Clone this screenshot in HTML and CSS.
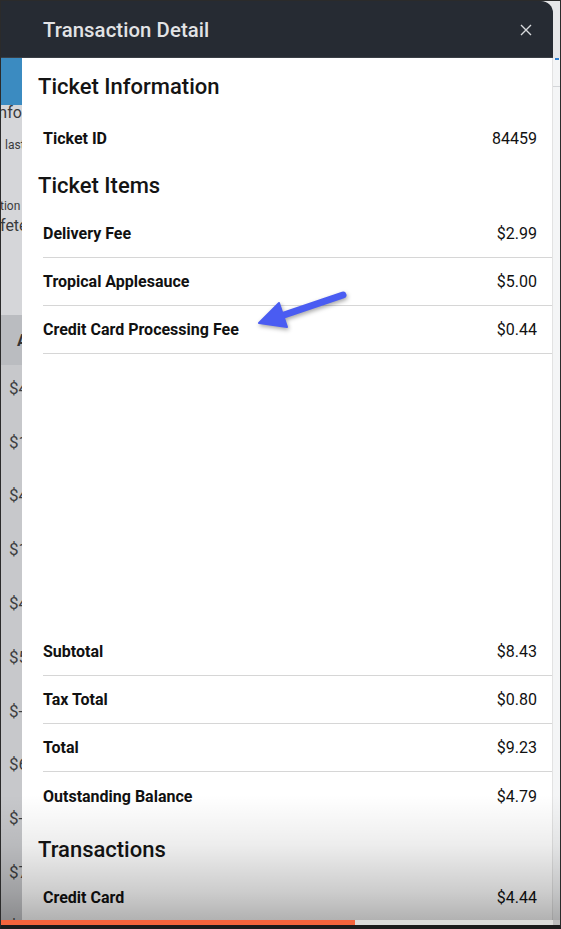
FILE: index.html
```html
<!DOCTYPE html>
<html>
<head>
<meta charset="utf-8">
<link rel="stylesheet" href="styles.css">
</head>
<body>
<div class="screen">
  <div class="topbar">
    <div class="header">
      <span class="title">Transaction Detail</span>
      <svg class="close" width="12" height="12" viewBox="0 0 12 12"><path d="M1 1L11 11M11 1L1 11" stroke="#d8dadd" stroke-width="1.4" fill="none"/></svg>
    </div>
    <div class="topgap"></div>
  </div>
  <div class="main">
    <div class="leftstrip">
      <div class="bluebox"></div>
      <div class="infoarea">
        <div class="t16 neg7">Information</div>
        <div class="t12 last">last</div>
        <div class="t12 neg1 tion">tion</div>
        <div class="t16 neg1 fete">fete</div>
      </div>
      <div class="band"><span>A</span></div>
      <div class="amounts">
        <div class="amt">$4.00</div>
        <div class="amt">$1.00</div>
        <div class="amt">$4.00</div>
        <div class="amt">$1.00</div>
        <div class="amt">$4.00</div>
        <div class="amt">$5.00</div>
        <div class="amt">$-1.00</div>
        <div class="amt">$6.00</div>
        <div class="amt">$-1.00</div>
        <div class="amt">$7.00</div>
        <div class="amt">$-1.00</div>
      </div>
    </div>
    <div class="modal">
      <h2 class="h-first">Ticket Information</h2>
      <div class="row plain r-id"><span class="lbl">Ticket ID</span><span class="val">84459</span></div>
      <h2 class="h-items">Ticket Items</h2>
      <div class="items">
        <div class="row"><span class="lbl">Delivery Fee</span><span class="val">$2.99</span></div>
        <div class="row"><span class="lbl">Tropical Applesauce</span><span class="val">$5.00</span></div>
        <div class="row"><span class="lbl">Credit Card Processing Fee</span><span class="val">$0.44</span></div>
      </div>
      <div class="spacer"></div>
      <div class="row"><span class="lbl">Subtotal</span><span class="val">$8.43</span></div>
      <div class="row"><span class="lbl">Tax Total</span><span class="val">$0.80</span></div>
      <div class="row"><span class="lbl">Total</span><span class="val">$9.23</span></div>
      <div class="row plain"><span class="lbl">Outstanding Balance</span><span class="val">$4.79</span></div>
      <h2 class="h-trans">Transactions</h2>
      <div class="row plain r-cc"><span class="lbl">Credit Card</span><span class="val">$4.44</span></div>
    </div>
    <div class="rightstrip">
      <div class="blueline"></div>
      <div class="greyline"></div>
    </div>
    <div class="fade"></div>
  </div>
  <div class="progress">
    <div class="done"></div>
    <div class="rest"></div>
    <div class="restgap"></div>
  </div>
  <svg class="arrow" width="120" height="60" viewBox="0 0 120 60">
    <path d="M103 15 L41 36" stroke="#4a5cf2" stroke-width="7" stroke-linecap="round" fill="none"/>
    <path d="M19 43 L39 23 L47 47 Z" fill="#4a5cf2" stroke="#4a5cf2" stroke-width="2" stroke-linejoin="round"/>
  </svg>
</div>
</body>
</html>
```
FILE: styles.css
```css
* { box-sizing: border-box; }
html, body { margin: 0; padding: 0; background: #1e1e1e; }
.screen {
  position: relative;
  width: 561px;
  height: 929px;
  border: 1px solid #2b2b2b;
  border-bottom: 4px solid #1c1c1c;
  display: flex;
  flex-direction: column;
  overflow: hidden;
  font-family: Roboto, "Liberation Sans", sans-serif;
  background: #e9eaec;
}
.topbar { display: flex; height: 57px; flex: none; background: #e6e7e9; }
.header {
  width: 552px;
  background: #262b33;
  border-top-right-radius: 12px;
  display: flex;
  align-items: center;
  justify-content: space-between;
  padding: 0 21px 0 42px;
  border-bottom: 1px solid #3a3f46;
}
.title { color: #e2e3e5; font-size: 20.3px; font-weight: 500; letter-spacing: 0.1px; margin-top: 2px; }
.close { display: block; margin-top: 2px; }
.topgap { flex: 1; }
.main { position: relative; display: flex; height: 862px; flex: none; }
.leftstrip {
  width: 21px;
  flex: none;
  background: #c7c8cb;
  overflow: hidden;
  white-space: nowrap;
  color: #3a3b3d;
}
.bluebox { height: 47px; background: #3b8bc1; }
.infoarea { height: 210px; background: #d5d6d9; }
.t16 { font-size: 16px; line-height: 16px; }
.t12 { font-size: 12px; line-height: 14px; }
.neg7 { margin-left: -7px; }
.neg1 { margin-left: -1px; }
.last { margin-top: 17px; margin-left: 4px; }
.tion { margin-top: 47px; }
.fete { margin-top: 5px; }
.band {
  height: 50px;
  background: #babcc0;
  display: flex;
  align-items: center;
  font-weight: 700;
  font-size: 16px;
  padding-left: 16px;
  color: #333;
}
.amounts { margin-top: -4px; }
.amt { height: 53.8px; display: flex; align-items: center; padding-left: 8px; font-size: 17px; color: #3d3e40; }
.modal {
  width: 531px;
  flex: none;
  background: #fff;
  padding-left: 16px;
  border-right: 1px solid #e2e2e2;
  overflow: hidden;
}
h2 {
  margin: 0;
  font-size: 22px;
  line-height: 28px;
  font-weight: 500;
  color: #141414;
}
.h-first { margin-top: 15px; }
.h-items { margin-top: 10px; }
.h-trans { margin-top: 16px; }
.row {
  height: 48px;
  margin-left: 5px;
  padding-right: 15px;
  border-bottom: 1px solid #d6d6d6;
  display: flex;
  align-items: center;
  justify-content: space-between;
  font-size: 16px;
  color: #111;
}
.row.plain { border-bottom: none; }
.r-id { margin-top: 13px; }
.items { margin-top: 10px; }
.r-cc { margin-top: 9px; }
.lbl { font-weight: 700; }
.val { font-weight: 400; }
.spacer { height: 274px; }
.rightstrip { flex: 1; background: #f4f5f6; position: relative; }
.blueline { height: 2px; margin: 0 1px 0 2px; background: #2f7fd0; }
.greyline { height: 1px; margin-top: 26px; background: #d4d6d9; }
.fade {
  position: absolute;
  left: 0;
  right: 0;
  bottom: 0;
  height: 125px;
  background: linear-gradient(to bottom, rgba(0,0,0,0) 0%, rgba(0,0,0,0.07) 40%, rgba(0,0,0,0.2) 78%, rgba(0,0,0,0.3) 100%);
  pointer-events: none;
}
.progress { display: flex; height: 5px; flex: none; }
.done { width: 354px; background: #f4643c; }
.rest { width: 198px; background: #dcdcda; }
.restgap { flex: 1; background: #bdbdbd; }
.arrow {
  position: absolute;
  left: 239px;
  top: 279px;
  filter: drop-shadow(1px 2px 2px rgba(0,0,0,0.35));
}
```
